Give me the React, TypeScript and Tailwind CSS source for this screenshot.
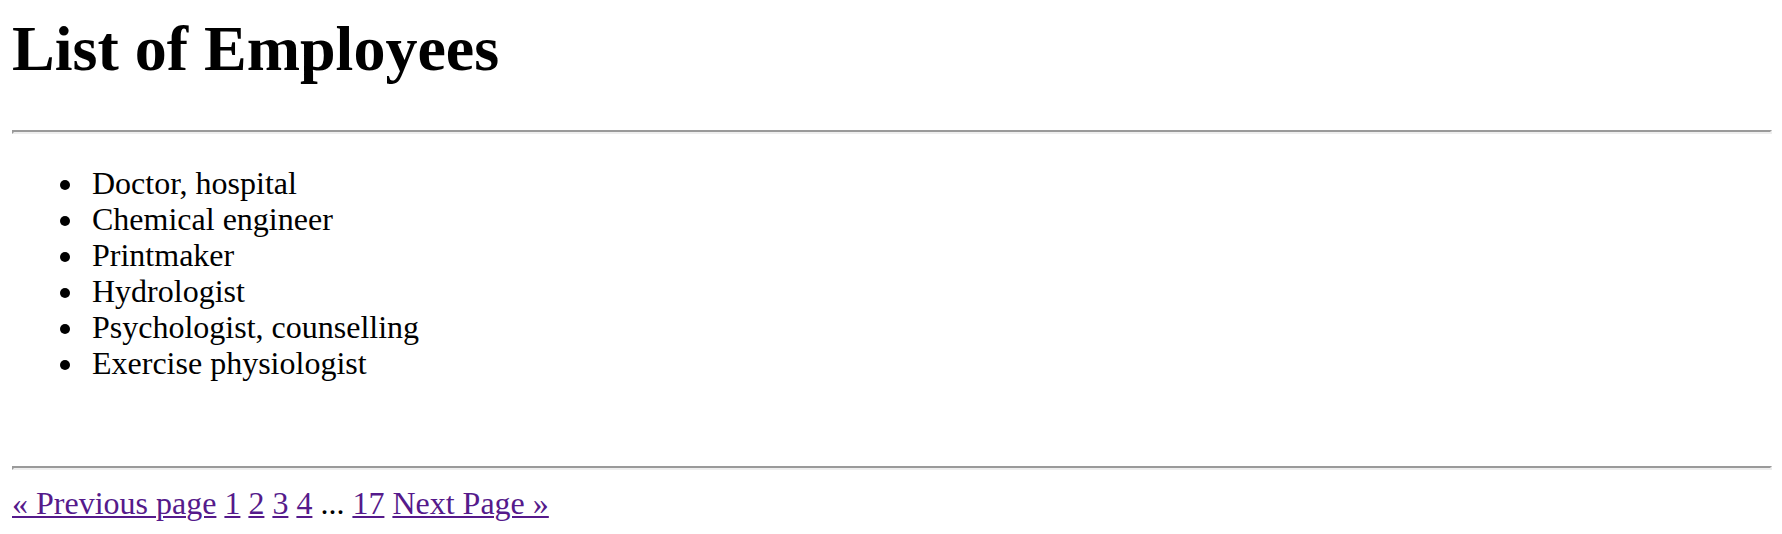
const employees = [
  'Doctor, hospital',
  'Chemical engineer',
  'Printmaker',
  'Hydrologist',
  'Psychologist, counselling',
  'Exercise physiologist',
];

const link = 'text-[#551a8b] underline decoration-2 underline-offset-2';

function Rule() {
  return <hr className="h-1 border-2 border-t-[#9a9a9a] border-l-[#9a9a9a] border-r-[#eeeeee] border-b-[#eeeeee]" />;
}

export default function App() {
  return (
    <main className="bg-white pt-4 pr-[10px] pb-3 pl-3 font-['Liberation_Serif',serif] text-[32px] leading-9 text-black">
      <h1 className="mb-12 text-[64px] leading-[66px] font-bold">List of Employees</h1>
      <Rule />
      <ul className="mt-[31px] mb-[85px] pl-12">
        {employees.map((name) => (
          <li
            key={name}
            className="flex items-center gap-[22px] before:mt-1 before:size-[10px] before:rounded-full before:bg-black before:content-['']"
          >
            {name}
          </li>
        ))}
      </ul>
      <Rule />
      <nav aria-label="Pagination" className="mt-[15px]">
        <a href="#previous" className={link}>« Previous page</a>{' '}
        <a href="#1" className={link}>1</a>{' '}
        <a href="#2" className={link}>2</a>{' '}
        <a href="#3" className={link}>3</a>{' '}
        <a href="#4" className={link}>4</a> ...{' '}
        <a href="#17" className={link}>17</a>{' '}
        <a href="#next" className={link}>Next Page »</a>
      </nav>
    </main>
  );
}
